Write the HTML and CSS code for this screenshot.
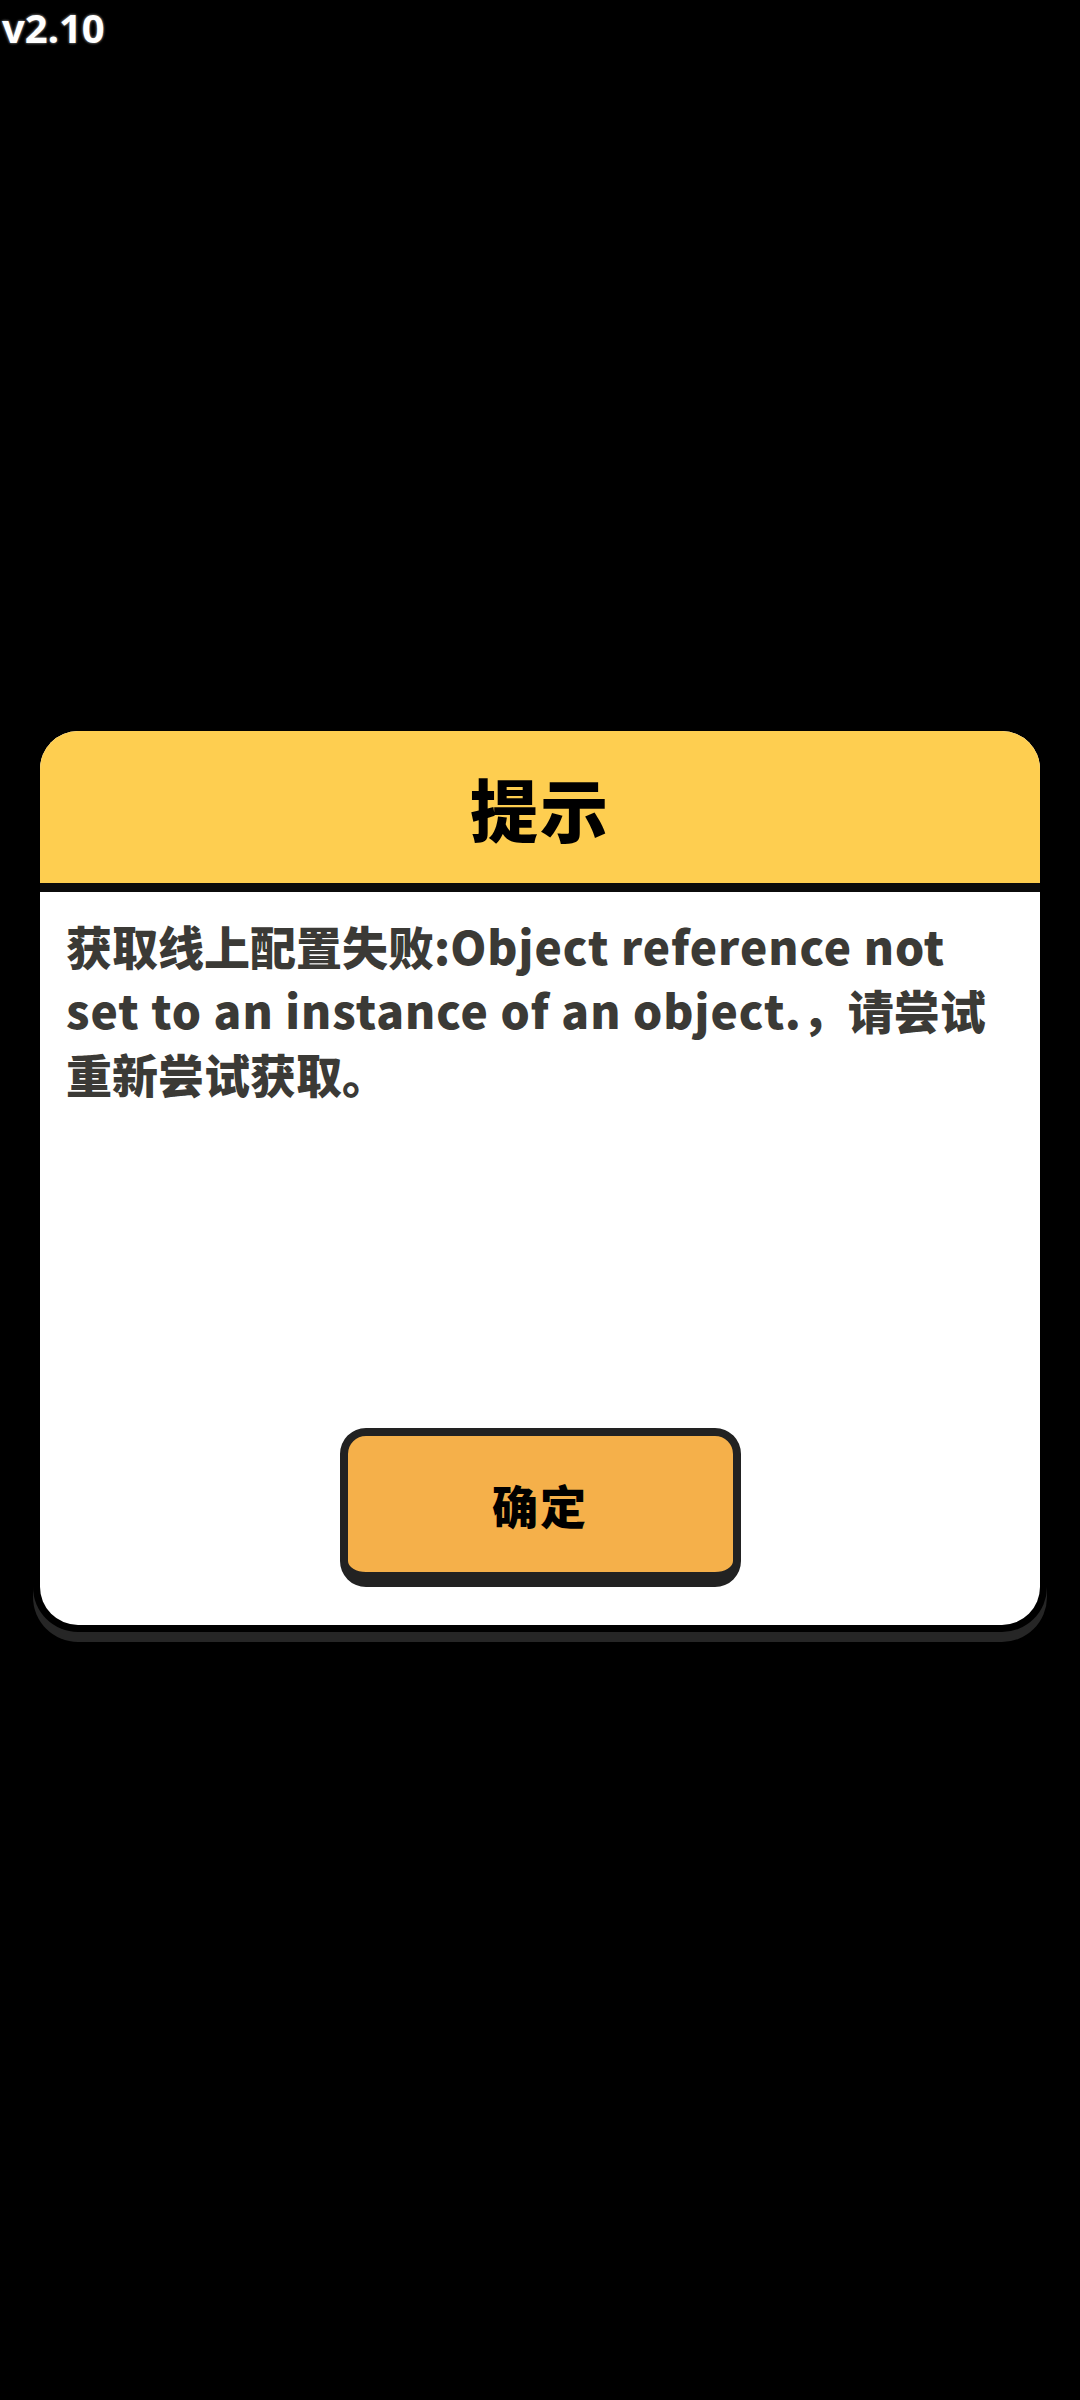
FILE: index.html
```html
<!DOCTYPE html>
<html lang="zh">
<head>
<meta charset="utf-8">
<link rel="stylesheet" href="styles.css">
</head>
<body>
<div class="version">v2.10</div>
<div class="card">
  <div class="card-header">提示</div>
  <div class="card-body">
    <p class="message">获取线上配置失败:<span class="latin">Object reference not</span><br><span class="latin">set to an instance of an object.</span>，请尝试<br>重新尝试获取。</p>
    <button class="ok-btn">确定</button>
  </div>
</div>
</body>
</html>
```

FILE: styles.css
```css
html, body {
  margin: 0;
  padding: 0;
  background: #000;
}
body {
  width: 1080px;
  height: 2400px;
  font-family: "Noto Sans CJK SC", "Noto Sans", sans-serif;
}
.version {
  font-family: "Noto Sans", "Noto Sans CJK SC", sans-serif;
  font-weight: 700;
  font-size: 40px;
  line-height: 56px;
  height: 46px;
  color: #fff;
  padding-left: 2px;
  text-shadow: 0 0 3px #555, 0 0 3px #555, 0 0 2px #666;
}
.card {
  width: 1000px;
  margin: 685px 0 0 40px;
  border-radius: 38px;
  overflow: hidden;
  background: #fff;
  box-shadow: 0 0 0 7px #000, 0 10px 0 7px #262626;
}
.card-header {
  height: 152px;
  background: #FECE50;
  border-bottom: 9px solid #0b0b0b;
  display: flex;
  align-items: center;
  justify-content: center;
  font-size: 68px;
  font-weight: 900;
  color: #000;
  letter-spacing: 2px;
}
.card-body {
  height: 733px;
  box-sizing: border-box;
  padding: 21px 26px 38px;
  display: flex;
  flex-direction: column;
}
.message {
  margin: 0;
  font-size: 46px;
  line-height: 64px;
  font-weight: 900;
  color: #3B3A36;
  white-space: nowrap;
}
.latin {
  letter-spacing: 1px;
}
.ok-btn {
  margin-top: auto;
  align-self: center;
  width: 401px;
  height: 159px;
  box-sizing: border-box;
  border: 8px solid #222;
  border-bottom-width: 15px;
  border-radius: 26px;
  background: #F5B04A;
  font-family: "Noto Sans CJK SC", sans-serif;
  font-size: 46px;
  font-weight: 900;
  color: #000;
  padding: 0;
  letter-spacing: 2px;
}
```
